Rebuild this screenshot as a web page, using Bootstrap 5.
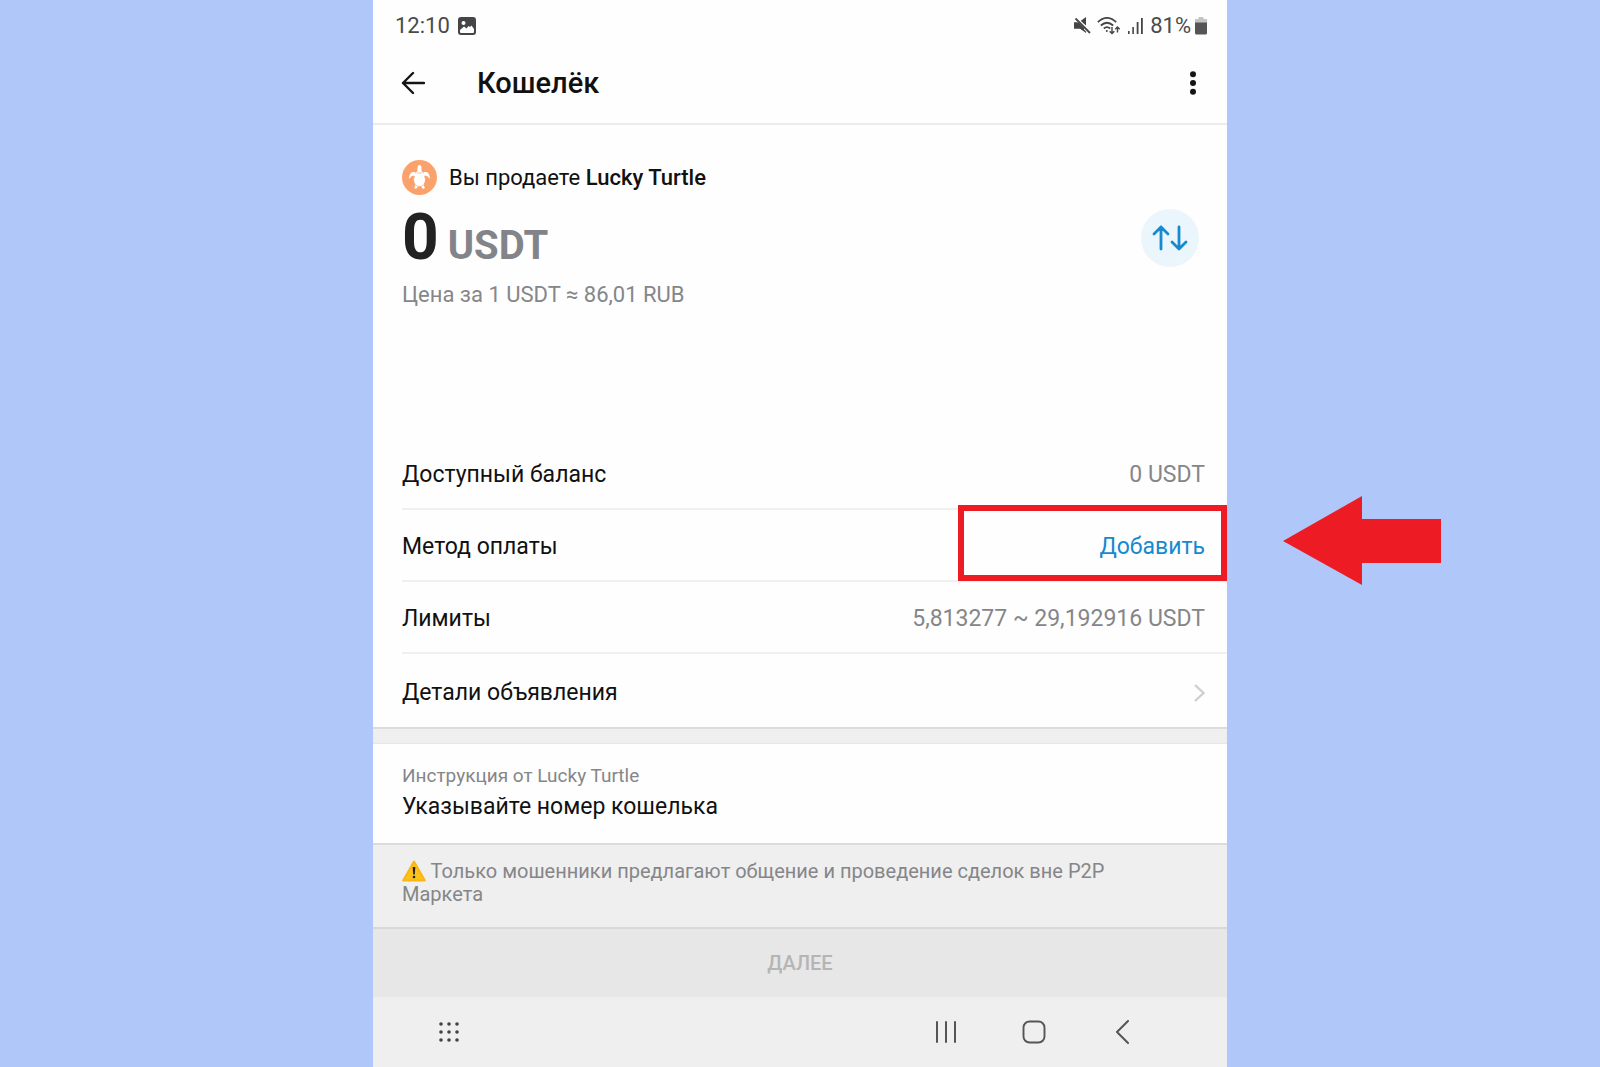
<!DOCTYPE html>
<html lang="ru">
<head>
<meta charset="utf-8">
<meta name="viewport" content="width=device-width, initial-scale=1">
<title>Кошелёк</title>
<link href="https://cdn.jsdelivr.net/npm/bootstrap@5.3.0/dist/css/bootstrap.min.css" rel="stylesheet">
<style>
  body { background: #b0c8f9; font-family: Roboto, "Noto Sans", sans-serif; color: #111; font-size: 23px; line-height: 28px; }
  svg { display: block; }
  .phone { max-width: 854px; background: #fefefe; }
  .side { padding-left: 29px; padding-right: 22px; }
  .status { height: 50px; padding: 1px 20px 0 22px; color: #4a4a4c; font-size: 22px; }
  .icons { gap: 6px; }
  .topbar { height: 75px; padding: 0 27px 8px 28px; border-bottom: 2px solid #ebebeb; }
  .topbar h1 { font-size: 29px; font-weight: 500; line-height: 36px; margin-left: 52px; }
  .plain { border: 0; background: none; padding: 0; color: inherit; }
  .deal { min-height: 313px; padding-top: 35px; }
  .seller { font-size: 22px; gap: 12px; }
  .seller strong, .next { font-weight: 500; }
  .amount { height: 64px; margin-top: 11px; padding-right: 6px; }
  .amount .value { font-size: 64px; line-height: 64px; font-weight: 700; color: #222; }
  .amount .unit { font-size: 40px; font-weight: 700; color: #828489; margin-left: 9px; }
  .swap { width: 58px; height: 58px; background: #ebf5fc; color: #168acd; }
  .grey { color: #858689; }
  .price { font-size: 22px; margin-top: 11px; }
  .line { height: 72px; margin-left: 29px; padding-top: 4px; padding-right: 22px; border-bottom: 2px solid #f0f0f0; }
  .line:last-child { height: 73px; border-bottom: 0; }
  .add { color: #168acd; text-decoration: none; }
  .marker { position: absolute; top: -5px; bottom: -1px; right: 0; width: 269px; border: 6px solid #ed1c24; pointer-events: none; }
  .arrow { position: absolute; top: -14px; left: 100%; margin-left: 56px; }
  .gap-bar { height: 17px; background: #efefef; border-top: 2px solid #dcdcdc; border-bottom: 1px solid #e6e6e6; }
  .note { height: 99px; padding-top: 18px; }
  .note .caption { font-size: 19px; }
  .note .msg { margin-top: 3px; }
  .warning { height: 84px; padding-top: 15px; background: #efefef; border-top: 2px solid #dcdcdc; font-size: 20px; line-height: 23px; padding-right: 100px; }
  .warning svg { display: inline-block; vertical-align: -4px; }
  .next { height: 70px; background: #e7e7e7; color: #b5b5b5; border: 0; border-top: 2px solid #d8d8d8; font-size: 20px; }
  .sysnav { min-height: 70px; background: #efefef; padding-left: 32px; padding-right: 61px; color: #555; }
  .sysnav button { width: 88px; height: 70px; }
</style>
<script src="https://cdn.jsdelivr.net/npm/bootstrap@5.3.0/dist/js/bootstrap.bundle.min.js" defer></script>
</head>
<body class="overflow-x-hidden">
<main class="phone mx-auto min-vh-100 d-flex flex-column">
  <div class="status d-flex align-items-center justify-content-between">
    <div class="d-flex align-items-center gap-2">
      <span>12:10</span>
      <svg width="18" height="18" viewBox="0 0 18 18"><rect width="18" height="18" rx="3" fill="#454547"/><circle cx="5.500" cy="6" r="2" fill="#fff"/><path d="M2 13l4-3.500 2.500 2 2-2.500 1.500 1 1.500-1.500L16 12v3a1 1 0 0 1-1 1H3a1 1 0 0 1-1-1z" fill="#fff"/></svg>
    </div>
    <div class="icons d-flex align-items-center">
      <svg width="17" height="17" viewBox="0 0 17 17" fill="#454547"><path d="M0 5.500h4L12 14v2L6 11.500H0zM6.500 4L12 0v8.500z"/><path d="M1.500 1l14.500 15" stroke="#fefefe" stroke-width="3.600"/><path d="M1.500 1.500l14.500 14.500" stroke="#454547" stroke-width="1.800"/><path d="M0 5.500h4.500L10 11v3l-4-2.500H0z"/></svg>
      <svg width="24" height="18" viewBox="0 0 24 18" fill="none" stroke="#454547" stroke-width="1.700"><path d="M.8 5.200Q10-3.500 19.200 5.200M3.800 8.500q6.200-5.500 12.400 0M6.800 11.500q3.200-2.600 6.400 0"/><circle cx="9.800" cy="14" r="1" fill="#454547" stroke="none"/><path d="M15 10v6.500m-2.300-2.300L15 16.500l2.300-2.300M20.500 15.500V10m-2.200 2.200 2.200-2.200 2.200 2.200" stroke-width="1.400"/></svg>
      <svg width="17" height="17" viewBox="0 0 17 17" fill="#454547"><path d="M1 14h1.600v3H1zM5.300 10h1.600v7H5.300zM9.700 5h1.800v12H9.700zM14 1h1.800v16H14z"/></svg>
      <span class="d-flex align-items-center gap-1">81%<svg width="12" height="18" viewBox="0 0 12 18"><path d="M3.500 0h5v2H12v4H0V2h3.500z" fill="#c4c4c4"/><path d="M0 5.500h12V16a1.500 1.500 0 0 1-1.500 1.500h-9A1.500 1.500 0 0 1 0 16z" fill="#555"/></svg></span>
    </div>
  </div>

  <header class="topbar d-flex align-items-center">
    <button class="plain" type="button" aria-label="Назад"><svg width="24" height="24" viewBox="0 0 24 24" fill="none" stroke="#151515" stroke-width="2.400" stroke-linecap="round" stroke-linejoin="round"><path d="M23 12H2M12 2 2 12l10 10"/></svg></button>
    <h1 class="mb-0">Кошелёк</h1>
    <button class="plain ms-auto" type="button" aria-label="Меню"><svg width="14" height="24" viewBox="0 0 14 24" fill="#151515"><circle cx="7" cy="3.200" r="3"/><circle cx="7" cy="12" r="3"/><circle cx="7" cy="20.800" r="3"/></svg></button>
  </header>

  <section class="deal side">
    <div class="seller d-flex align-items-center">
      <svg width="35" height="35" viewBox="0 0 35 35"><circle cx="17.500" cy="17.500" r="17.500" fill="#fba26c"/><g fill="#fff"><path d="M15.500 12V8q0-3 2-3t2 3v4zM13.500 12.500c-4-1.500-6 1-6.500 6.500 2-2.500 3-3.500 6-3.500zM21.500 12.500c4-1.500 6 1 6.500 6.500-2-2.500-3-3.500-6-3.500zM14 24l-2 4 2 1 2.500-3zM21 24l2 4-2 1-2.500-3z"/><ellipse cx="17.500" cy="18.700" rx="5.700" ry="8"/></g><path d="M15 13h5M12.500 16l-.8 3M22.500 16l.8 3M14 25l2 1.700h3l2-1.700" fill="none" stroke="#fba26c" stroke-width=".7"/></svg>
      <span>Вы продаете <strong>Lucky Turtle</strong></span>
    </div>
    <div class="amount d-flex align-items-center justify-content-between">
      <div class="d-flex align-items-baseline"><span class="value">0</span><span class="unit">USDT</span></div>
      <button class="swap btn rounded-circle p-0 d-flex align-items-center justify-content-center" type="button" aria-label="Поменять валюту"><svg width="36" height="26" viewBox="0 0 36 26" fill="none" stroke="currentColor" stroke-width="2.800" stroke-linecap="round" stroke-linejoin="round"><path d="M9 24V2M2 9l7-7 7 7M27 2v22M20 17l7 7 7-7"/></svg></button>
    </div>
    <div class="price grey">Цена за 1 USDT ≈ 86,01 RUB</div>
  </section>

  <section>
    <div class="line d-flex align-items-center justify-content-between"><span>Доступный баланс</span><span class="grey">0 USDT</span></div>
    <div class="line d-flex align-items-center justify-content-between position-relative">
      <span>Метод оплаты</span><a class="add" href="#">Добавить</a>
      <span class="marker"></span>
      <svg class="arrow" width="160" height="90" viewBox="0 0 160 90" fill="#ed1c24"><path d="M0 45 79 0v23h79v44H79v22z"/></svg>
    </div>
    <div class="line d-flex align-items-center justify-content-between"><span>Лимиты</span><span class="grey">5,813277 ~ 29,192916 USDT</span></div>
    <div class="line d-flex align-items-center justify-content-between"><span>Детали объявления</span>
      <svg width="11" height="18" viewBox="0 0 11 18" fill="none" stroke="#cfcfcf" stroke-width="2.400"><path d="M1 1l8.500 8L1 17"/></svg>
    </div>
  </section>

  <div class="gap-bar"></div>
  <section class="note side">
    <div class="caption grey">Инструкция от Lucky Turtle</div>
    <div class="msg">Указывайте номер кошелька</div>
  </section>
  <div class="warning side grey"><svg width="24" height="22" viewBox="0 0 24 22"><path d="M12 1.500 22.800 20.500H1.200z" fill="#fcc21b" stroke="#f9b616" stroke-width="2" stroke-linejoin="round"/><path d="M10.700 7h2.600l-.5 7.500h-1.600z" fill="#222"/><circle cx="12" cy="17" r="1.300" fill="#222"/></svg> Только мошенники предлагают общение и проведение сделок вне P2P Маркета</div>
  <button class="next w-100" type="button">ДАЛЕЕ</button>

  <nav class="sysnav flex-grow-1 d-flex align-items-center">
    <button class="plain d-flex align-items-center justify-content-center" type="button" aria-label="Приложения"><svg width="20" height="20" viewBox="0 0 20 20" fill="#444"><circle cx="2" cy="2" r="1.800"/><circle cx="10" cy="2" r="1.800"/><circle cx="18" cy="2" r="1.800"/><circle cx="2" cy="10" r="1.800"/><circle cx="10" cy="10" r="1.800"/><circle cx="18" cy="10" r="1.800"/><circle cx="2" cy="18" r="1.800"/><circle cx="10" cy="18" r="1.800"/><circle cx="18" cy="18" r="1.800"/></svg></button>
    <button class="plain ms-auto d-flex align-items-center justify-content-center" type="button" aria-label="Недавние"><svg width="22" height="22" viewBox="0 0 22 22" stroke="currentColor" stroke-width="2" stroke-linecap="round"><path d="M2 1v20M11 1v20M20 1v20"/></svg></button>
    <button class="plain d-flex align-items-center justify-content-center" type="button" aria-label="Домой"><svg width="24" height="24" viewBox="0 0 24 24" fill="none" stroke="currentColor" stroke-width="1.900"><rect x="1.500" y="1.500" width="21" height="21" rx="6"/></svg></button>
    <button class="plain d-flex align-items-center justify-content-center" type="button" aria-label="Назад"><svg width="14" height="24" viewBox="0 0 14 24" fill="none" stroke="currentColor" stroke-width="2" stroke-linecap="round" stroke-linejoin="round"><path d="M13 1 2 12l11 11"/></svg></button>
  </nav>
</main>
</body>
</html>
